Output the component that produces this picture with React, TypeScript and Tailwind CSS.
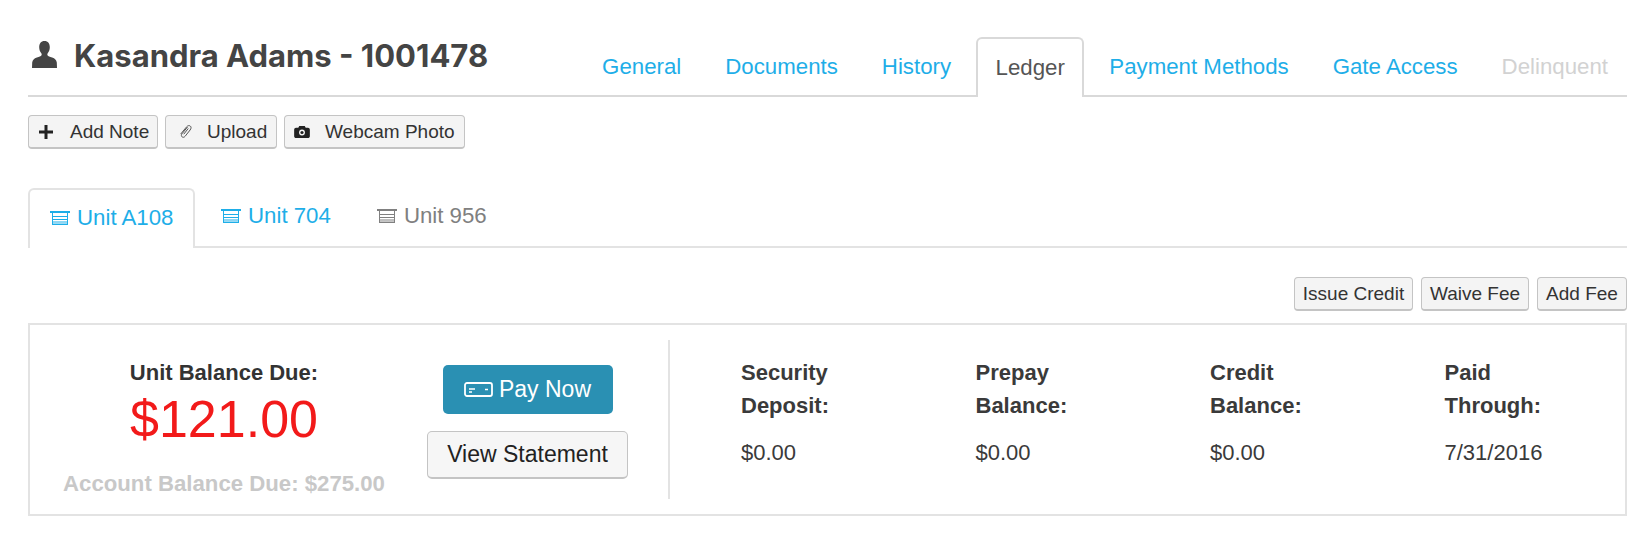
import React from "react";

const sans = "font-['Liberation_Sans',Arial,sans-serif]";

function UserIcon() {
  return (
    <svg width="25" height="27" viewBox="0 0 25 27" className="text-[#444444]" fill="currentColor">
      <path d="M12.5 0C8.9 0 7.2 2.6 7.2 6.2c0 2.6.9 4.6 2.1 6 .5.6.5 1.4.2 2-.6 1-2.300 1.500-4.600 2.300C2 17.600.6 18.800.2 21.500L0 27h25l-.2-5.500c-.4-2.700-1.800-3.900-4.700-5-2.300-.8-4-1.300-4.600-2.300-.3-.6-.3-1.400.2-2 1.200-1.400 2.100-3.400 2.100-6C17.800 2.600 16.100 0 12.500 0z" />
    </svg>
  );
}

function PlusIcon() {
  return (
    <svg width="14" height="14" viewBox="0 0 14 14" fill="#222222">
      <path d="M5.500 0h3v5.500H14v3H8.500V14h-3V8.500H0v-3h5.500z" />
    </svg>
  );
}

function ClipIcon() {
  return (
    <svg width="13" height="14" viewBox="0 0 13 14" fill="none" stroke="#555555" strokeWidth="1" strokeLinecap="round">
      <path d="M8.300 2.300 3 8.800c-.9 1.200-.8 2.400.1 3.100.9.700 2.100.5 3-.6l5-6.300c1.300-1.700 1.200-3.200.1-4-1.100-.8-2.600-.4-3.800 1.100L1.900 8.800" />
      <path d="M9 3.800 5 8.900" />
    </svg>
  );
}

function CameraIcon() {
  return (
    <svg width="16" height="12" viewBox="0 0 17 13">
      <path fill="#222222" d="M5.500 0h6l1 2H15c1.100 0 2 .9 2 2v7c0 1.100-.9 2-2 2H2c-1.100 0-2-.9-2-2V4c0-1.100.9-2 2-2h2.500z" />
      <circle cx="8.500" cy="7" r="3.200" fill="#f4f4f4" />
      <circle cx="8.500" cy="7" r="1.700" fill="#222222" />
    </svg>
  );
}

function UnitIcon({ color }: { color: string }) {
  return (
    <svg width="20" height="14" viewBox="0 0 20 14" fill="none" stroke={color}>
      <path strokeWidth="2" d="M0 1h20" />
      <path strokeWidth="1" d="M2.500 2v12M17.500 2v12" />
      <path strokeWidth="1" d="M3 5.500h14M3 8.500h14M3 11h14" />
      <path strokeWidth="1.500" d="M2 13.300h16" />
    </svg>
  );
}

function CardIcon() {
  return (
    <svg width="29" height="15" viewBox="0 0 29 15" fill="none" stroke="#ffffff">
      <rect x="1" y="1" width="27" height="13" rx="2" strokeWidth="1.800" />
      <path strokeWidth="1.600" d="M5 7h6M5 10h3M21 7.500h3" />
    </svg>
  );
}

const topTabs = [
  { label: "General", cls: "px-[22px] text-[#1eaee8]" },
  { label: "Documents", cls: "px-[22px] text-[#1eaee8]" },
  { label: "History", cls: "px-[22px] text-[#1eaee8]" },
  { label: "Ledger", active: true, cls: "text-[#555555]" },
  { label: "Payment Methods", cls: "px-[22px] text-[#1eaee8]" },
  { label: "Gate Access", cls: "px-[22px] text-[#1eaee8]" },
  { label: "Delinquent", cls: "pl-[22px] pr-[19px] text-[#d2d2d2]" },
];

const stats = [
  { a: "Security", b: "Deposit:", v: "$0.00" },
  { a: "Prepay", b: "Balance:", v: "$0.00" },
  { a: "Credit", b: "Balance:", v: "$0.00" },
  { a: "Paid", b: "Through:", v: "7/31/2016" },
];

function SmallButton({ children, className }: { children: React.ReactNode; className: string }) {
  return (
    <button className={`flex h-[34px] items-center rounded-[4px] border border-[#c4c4c4] border-b-[2px] bg-[#f4f4f4] pt-[1px] text-[19px] text-[#333333] ${className}`}>
      {children}
    </button>
  );
}

export default function App() {
  return (
    <div className={`h-[536px] w-[1648px] overflow-hidden bg-white pl-[28px] pr-[21px] ${sans}`}>
      <div className="flex h-[97px] items-end justify-between border-b-[2px] border-[#d9d9d9]">
        <div className="mb-[19px] flex items-center">
          <div className="mb-[3px] ml-[4px] mr-[17px]">
            <UserIcon />
          </div>
          <h1 className="font-['Inter',sans-serif] text-[31px] font-bold leading-[40px] text-[#444444]">
            Kasandra Adams - 1001478
          </h1>
        </div>
        <div className="-mb-[2px] flex">
          {topTabs.map((t) =>
            t.active ? (
              <div
                key={t.label}
                className={`mx-[3px] flex h-[60px] items-center rounded-t-[6px] border-x-[2px] border-t-[2px] border-[#d9d9d9] bg-white px-[17.5px] pb-[1px] text-[22.25px] ${t.cls}`}
              >
                {t.label}
              </div>
            ) : (
              <div key={t.label} className={`flex h-[60px] items-center pb-[1px] text-[22.25px] ${t.cls}`}>
                {t.label}
              </div>
            ),
          )}
        </div>
      </div>

      <div className="mt-[18px] flex gap-[7px]">
        <SmallButton className="w-[130px] pl-[10px]">
          <PlusIcon />
          <span className="ml-[17px]">Add Note</span>
        </SmallButton>
        <SmallButton className="w-[112px] pl-[13px]">
          <ClipIcon />
          <span className="ml-[15px]">Upload</span>
        </SmallButton>
        <SmallButton className="w-[181px] pl-[9px]">
          <CameraIcon />
          <span className="ml-[15px]">Webcam Photo</span>
        </SmallButton>
      </div>

      <div className="mt-[39px] flex h-[60px] items-stretch border-b-[2px] border-[#e3e3e3] text-[22.25px]">
        <div className="-mb-[2px] flex w-[167px] items-center rounded-t-[6px] border-x-[2px] border-t-[2px] border-[#e3e3e3] bg-white pb-[2px] pl-[20px] text-[#1eaee8]">
          <UnitIcon color="#1eaee8" />
          <span className="ml-[7px]">Unit A108</span>
        </div>
        <div className="ml-[26px] flex items-center pb-[2px] text-[#1eaee8]">
          <UnitIcon color="#1eaee8" />
          <span className="ml-[7px]">Unit 704</span>
        </div>
        <div className="ml-[46px] flex items-center pb-[2px] text-[#808080]">
          <UnitIcon color="#808080" />
          <span className="ml-[7px]">Unit 956</span>
        </div>
      </div>

      <div className="mt-[29px] flex justify-end gap-[8px]">
        <SmallButton className="w-[119px] justify-center">Issue Credit</SmallButton>
        <SmallButton className="w-[108px] justify-center">Waive Fee</SmallButton>
        <SmallButton className="w-[90px] justify-center">Add Fee</SmallButton>
      </div>

      <div className="mt-[12px] flex h-[193px] border-[2px] border-[#e3e3e3] py-[15px]">
        <div className="flex w-[640px] shrink-0 border-r-[2px] border-[#e3e3e3]">
          <div className="flex w-[388px] flex-col items-center pt-[19px]">
            <div className="text-[22px] font-bold leading-[28px] text-[#333333]">Unit Balance Due:</div>
            <div className="mt-[2px] text-[52px] leading-[60px] text-[#f21a1a]">$121.00</div>
            <div className="mt-[21px] text-[22.2px] font-bold leading-[28px] text-[#c8c8c8]">Account Balance Due: $275.00</div>
          </div>
          <div className="ml-[9px] flex w-[201px] flex-col items-center pt-[25px]">
            <button className="flex h-[49px] w-[170px] items-center justify-center gap-[6px] rounded-[5px] bg-[#2a90b3] text-[23px] text-white">
              <CardIcon />
              Pay Now
            </button>
            <button className="mt-[17px] h-[48px] w-[201px] rounded-[5px] border border-[#c4c4c4] border-b-[2px] bg-[#f6f6f6] text-[23px] text-[#222222]">
              View Statement
            </button>
          </div>
        </div>
        <div className="ml-[71px] grid grid-cols-[234.5px_234.5px_234.5px_1fr] pt-[16px]">
          {stats.map((s) => (
            <div key={s.a} className="text-[#3a3a3a]">
              <div className="text-[22px] font-bold leading-[33px]">
                {s.a}
                <br />
                {s.b}
              </div>
              <div className="mt-[14px] text-[22px] leading-[33px]">{s.v}</div>
            </div>
          ))}
        </div>
      </div>
    </div>
  );
}
